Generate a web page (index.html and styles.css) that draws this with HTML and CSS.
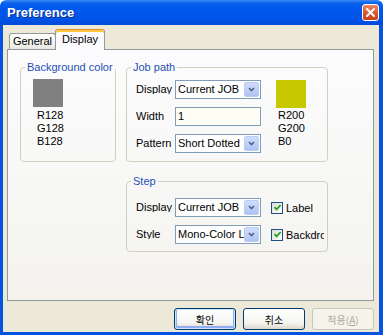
FILE: index.html
```html
<!DOCTYPE html>
<html>
<head>
<meta charset="utf-8">
<link rel="stylesheet" href="styles.css">
</head>
<body>
<div class="window">
  <div class="titlebar">
    <span class="title">Preference</span>
    <span class="close"><svg width="11" height="11" viewBox="0 0 11 11"><path d="M2 2 L9 9 M9 2 L2 9" stroke="#fff" stroke-width="2" stroke-linecap="round"/></svg></span>
  </div>
  <div class="body">
    <div class="tabs">
      <div class="tab">General</div>
      <div class="tab active">Display</div>
    </div>
    <div class="panel">
      <fieldset class="group bg">
        <legend>Background color</legend>
        <div class="bg-in">
          <div class="swatch grey"></div>
          <div class="rgb"><div>R128</div><div>G128</div><div>B128</div></div>
        </div>
      </fieldset>
      <div class="rightcol">
        <fieldset class="group job">
          <legend>Job path</legend>
          <div class="job-in">
            <div class="rows">
              <div class="row"><span class="lbl">Display</span><div class="combo"><span class="ctext">Current JOB</span><span class="cbtn"><svg width="7" height="5" viewBox="0 0 7 5"><path d="M1 1 L3.5 3.5 L6 1" fill="none" stroke="#4d6185" stroke-width="1.6"/></svg></span></div></div>
              <div class="row"><span class="lbl">Width</span><div class="textbox">1</div></div>
              <div class="row"><span class="lbl">Pattern</span><div class="combo"><span class="ctext">Short Dotted</span><span class="cbtn"><svg width="7" height="5" viewBox="0 0 7 5"><path d="M1 1 L3.5 3.5 L6 1" fill="none" stroke="#4d6185" stroke-width="1.6"/></svg></span></div></div>
            </div>
            <div class="swcol">
              <div class="swatch yellow"></div>
              <div class="rgb2"><div>R200</div><div>G200</div><div>B0</div></div>
            </div>
          </div>
        </fieldset>
        <fieldset class="group step">
          <legend>Step</legend>
          <div class="step-in">
            <div class="row"><span class="lbl">Display</span><div class="combo"><span class="ctext">Current JOB</span><span class="cbtn"><svg width="7" height="5" viewBox="0 0 7 5"><path d="M1 1 L3.5 3.5 L6 1" fill="none" stroke="#4d6185" stroke-width="1.6"/></svg></span></div>
              <div class="chk"><span class="box"><svg width="9" height="9" viewBox="0 0 9 9"><path d="M1.5 4.2 L3.6 6.4 L7.6 2" fill="none" stroke="#21a121" stroke-width="1.8"/></svg></span><span>Label</span></div></div>
            <div class="row"><span class="lbl">Style</span><div class="combo"><span class="ctext">Mono-Color Line</span><span class="cbtn"><svg width="7" height="5" viewBox="0 0 7 5"><path d="M1 1 L3.5 3.5 L6 1" fill="none" stroke="#4d6185" stroke-width="1.6"/></svg></span></div>
              <div class="chk"><span class="box"><svg width="9" height="9" viewBox="0 0 9 9"><path d="M1.5 4.2 L3.6 6.4 L7.6 2" fill="none" stroke="#21a121" stroke-width="1.8"/></svg></span><span>Backdrop</span></div></div>
          </div>
        </fieldset>
      </div>
    </div>
    <div class="buttons">
      <button class="btn default">확인</button>
      <button class="btn">취소</button>
      <button class="btn disabled">적용(<u>A</u>)</button>
    </div>
  </div>
</div>
</body>
</html>
```

FILE: styles.css
```css
* { box-sizing: border-box; }
html, body { margin: 0; padding: 0; background: #ffffff; }
body {
  font-family: "Liberation Sans", Arial, sans-serif;
  font-size: 11px;
  color: #000;
}
.window {
  width: 383px;
  height: 335px;
  display: flex;
  flex-direction: column;
}
.titlebar {
  height: 25px;
  flex: none;
  display: flex;
  align-items: center;
  justify-content: space-between;
  padding: 0 4px 0 7px;
  border-radius: 6px 6px 0 0;
  background: linear-gradient(to bottom, #3d8df7 0px, #0a62ec 3px, #0058ee 8px, #0055e8 18px, #004ad9 25px);
}
.title {
  color: #fff;
  font-weight: bold;
  font-size: 13px;
  line-height: 15px;
  text-shadow: 1px 1px 0 #0c2d93;
}
.close {
  width: 17px;
  height: 17px;
  border: 1px solid #fff;
  border-radius: 3px;
  background: linear-gradient(to bottom, #ea8a66, #d8572c 55%, #c7431c);
  display: flex;
  align-items: center;
  justify-content: center;
}
.body {
  flex: 1;
  display: flex;
  flex-direction: column;
  background: #ece9d8;
  border-style: solid;
  border-color: #0553e0;
  border-width: 0 4px 3px 3px;
  padding: 4px 5px 0 4px;
}
.tabs {
  display: flex;
  align-items: flex-end;
  height: 21px;
  padding-left: 2px;
  margin-bottom: -1px;
  position: relative;
  z-index: 1;
}
.tab {
  width: 47px;
  height: 16px;
  margin-bottom: 1px;
  border: 1px solid #919b9c;
  border-bottom: none;
  border-radius: 3px 3px 0 0;
  background: linear-gradient(to bottom, #ffffff, #f3f3ef 60%, #e8e7e1);
  display: flex;
  align-items: center;
  justify-content: center;
  line-height: 13px;
}
.tab.active {
  width: 50px;
  height: 21px;
  margin-left: -1px;
  margin-bottom: 0;
  border-top: 1px solid #e68b2c;
  box-shadow: inset 0 2px 0 #ffc83c;
  background: #fcfcfe;
  padding-bottom: 1px;
}
.panel {
  height: 252px;
  flex: none;
  border: 1px solid #919b9c;
  background: linear-gradient(to bottom, #fcfcfe, #f4f3ee);
  padding: 11px 0 0 12px;
  display: flex;
  align-items: flex-start;
  gap: 10px;
}
fieldset.group {
  margin: 0;
  padding: 0;
  min-width: 0;
  border: 1px solid #d0d0bf;
  border-radius: 4px;
}
legend {
  margin-left: 4px;
  padding: 0 2px;
  color: #1e50b4;
  line-height: 13px;
}
.bg { width: 96px; height: 101px; flex: none; }
.bg-in { padding: 5px 0 0 12px; }
.swatch { width: 30px; height: 28px; }
.grey { background: #808080; }
.yellow { background: #c8c800; }
.rgb { padding: 2px 0 0 4px; line-height: 13px; }
.rgb2 { padding: 1px 0 0 2px; line-height: 13px; }
.rightcol {
  width: 202px;
  flex: none;
  display: flex;
  flex-direction: column;
  gap: 13px;
}
.job { height: 101px; }
.job-in { display: flex; padding: 6px 0 0 9px; }
.rows { display: flex; flex-direction: column; gap: 8px; }
.row { display: flex; align-items: center; height: 19px; }
.lbl {
  width: 39px;
  flex: none;
  height: 10px;
  line-height: 11px;
  overflow: hidden;
  margin-bottom: 2px;
  white-space: nowrap;
}
.combo {
  width: 86px;
  height: 19px;
  flex: none;
  border: 1px solid #7f9db9;
  background: #fff;
  display: flex;
  align-items: stretch;
  padding: 1px;
}
.ctext {
  flex: 1;
  min-width: 0;
  overflow: hidden;
  white-space: nowrap;
  padding-left: 1px;
  line-height: 15px;
}
.cbtn {
  width: 15px;
  flex: none;
  border-radius: 2px;
  border: 1px solid #bccbf1;
  background: linear-gradient(to bottom, #d0ddfb, #bccdf7 60%, #afc3f4);
  display: flex;
  align-items: center;
  justify-content: center;
}
.textbox {
  width: 86px;
  height: 19px;
  border: 1px solid #7f9db9;
  background: #fffdf4;
  padding-left: 2px;
  line-height: 17px;
}
.swcol { margin-left: 15px; }
.step { height: 77px; }
.step-in { display: flex; flex-direction: column; gap: 8px; padding: 10px 0 0 9px; }
.chk {
  width: 53px;
  margin-left: 10px;
  overflow: hidden;
  white-space: nowrap;
  display: flex;
  align-items: center;
  gap: 3px;
}
.box {
  width: 12px;
  height: 12px;
  flex: none;
  border: 1px solid #1c5180;
  background: linear-gradient(135deg, #dcdcd7, #ffffff);
  display: flex;
  align-items: center;
  justify-content: center;
}
.buttons {
  display: flex;
  justify-content: flex-end;
  gap: 7px;
  margin-top: 7px;
}
.btn {
  width: 62px;
  height: 22px;
  padding: 0;
  border: 1px solid #003c74;
  border-radius: 3px;
  background: linear-gradient(to bottom, #ffffff, #f4f4f0 70%, #dcd7cc);
  font-family: "Noto Sans CJK KR", "Liberation Sans", sans-serif;
  font-size: 10px;
  color: #000;
}
.btn.default {
  box-shadow: inset 0 0 0 1px #cde3fd, inset 0 -1px 0 2px #8eaff2;
}
.btn.disabled {
  border-color: #c9c7ba;
  background: #f5f4ea;
  color: #aca899;
}
.btn u { text-decoration: underline; }
```
